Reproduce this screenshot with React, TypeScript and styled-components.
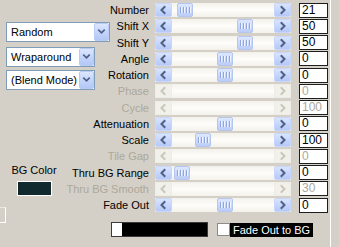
import styled, { createGlobalStyle } from "styled-components";

const GlobalStyle = createGlobalStyle`
  html, body {
    margin: 0;
    padding: 0;
    background: #d4d0c8;
  }
  body {
    font-family: "Liberation Sans", Arial, sans-serif;
    font-size: 11px;
    color: #000;
  }
`;

interface Param {
  label: string;
  value: string;
  thumb?: number;
  disabled?: boolean;
}

// thumb = left edge of the thumb, counted from the start of the slider
const params: Param[] = [
  { label: "Number", value: "21", thumb: 22 },
  { label: "Shift X", value: "50", thumb: 82 },
  { label: "Shift Y", value: "50", thumb: 82 },
  { label: "Angle", value: "0", thumb: 62 },
  { label: "Rotation", value: "0", thumb: 62 },
  { label: "Phase", value: "0", disabled: true },
  { label: "Cycle", value: "100", disabled: true },
  { label: "Attenuation", value: "0", thumb: 62 },
  { label: "Scale", value: "100", thumb: 40 },
  { label: "Tile Gap", value: "0", disabled: true },
  { label: "Thru BG Range", value: "0", thumb: 19 },
  { label: "Thru BG Smooth", value: "30", disabled: true },
  { label: "Fade Out", value: "0", thumb: 62 },
];

function Chevron({ dir, disabled }: { dir: "left" | "right" | "down"; disabled?: boolean }) {
  const pts =
    dir === "left"
      ? "9.5,4 6.5,7 9.5,10"
      : dir === "right"
      ? "7.5,4 10.5,7 7.5,10"
      : "4.5,7 7.5,10 10.5,7";
  const w = dir === "down" ? 15 : 17;
  const h = dir === "down" ? 18 : 14;
  return (
    <svg width={w} height={h} viewBox={`0 0 ${w} ${h}`}>
      <polyline
        points={pts}
        fill="none"
        stroke={disabled ? "#c9c7ba" : "#4d6185"}
        strokeWidth={2}
        strokeLinecap="square"
      />
    </svg>
  );
}

function Slider({ thumb, disabled }: { thumb?: number; disabled?: boolean }) {
  return (
    <SliderBox>
      <ArrowBtn $disabled={disabled}>
        <Chevron dir="left" disabled={disabled} />
      </ArrowBtn>
      <Track>
        {thumb !== undefined && !disabled && (
          <Thumb style={{ left: thumb - 17 }}>
            <Grip />
            <Grip />
            <Grip />
            <Grip />
          </Thumb>
        )}
      </Track>
      <ArrowBtn $disabled={disabled}>
        <Chevron dir="right" disabled={disabled} />
      </ArrowBtn>
    </SliderBox>
  );
}

export default function App() {
  return (
    <>
      <GlobalStyle />
      <Page>
        <LeftPane>
          <Combo $w={104} $top={22}>
            <ComboText>Random</ComboText>
            <ComboBtn>
              <Chevron dir="down" />
            </ComboBtn>
          </Combo>
          <Combo $w={89} $top={5}>
            <ComboText>Wraparound</ComboText>
            <ComboBtn>
              <Chevron dir="down" />
            </ComboBtn>
          </Combo>
          <Combo $w={89} $top={3}>
            <ComboText>(Blend Mode)</ComboText>
            <ComboBtn>
              <Chevron dir="down" />
            </ComboBtn>
          </Combo>
          <BgGroup>
            <BgLabel>BG Color</BgLabel>
            <Swatch />
          </BgGroup>
          <EdgeBox />
        </LeftPane>
        <Main>
          {params.map((p) => (
            <Row key={p.label}>
              <Label $disabled={p.disabled}>{p.label}</Label>
              <Slider thumb={p.thumb} disabled={p.disabled} />
              <ValueBox $disabled={p.disabled}>{p.value}</ValueBox>
            </Row>
          ))}
          <BottomBar>
            <ColorBar>
              <ColorStart />
            </ColorBar>
            <Check />
            <CheckLabel>Fade Out to BG</CheckLabel>
          </BottomBar>
        </Main>
        <RightEdge />
      </Page>
    </>
  );
}

const Page = styled.div`
  display: flex;
  width: 339px;
  height: 247px;
  overflow: hidden;
  background: #d4d0c8;
`;

const LeftPane = styled.div`
  width: 62px;
  flex-shrink: 0;
  display: flex;
  flex-direction: column;
`;

const Combo = styled.div<{ $w: number; $top: number }>`
  position: relative;
  z-index: 1;
  box-sizing: border-box;
  width: ${(p) => p.$w}px;
  height: 20px;
  margin: ${(p) => p.$top}px 0 0 6px;
  border: 1px solid #7f9db9;
  background: #fff;
  display: flex;
  align-items: center;
`;

const ComboText = styled.span`
  flex: 1;
  padding-left: 4px;
  white-space: nowrap;
`;

const ComboBtn = styled.div`
  width: 15px;
  height: 18px;
  margin-right: 0;
  box-sizing: border-box;
  border: 1px solid #b9cbf3;
  border-radius: 2px;
  background: linear-gradient(180deg, #dce6fd 0%, #c3d4fb 55%, #b3c7f6 100%);
  display: flex;
  align-items: center;
  justify-content: center;
`;

const BgGroup = styled.div`
  margin: 74px 0 0 12px;
  width: 44px;
  display: flex;
  flex-direction: column;
  align-items: center;
`;

const BgLabel = styled.span`
  line-height: 13px;
  white-space: nowrap;
`;

const Swatch = styled.div`
  margin-top: 4px;
  width: 35px;
  height: 15px;
  box-sizing: border-box;
  border: 1px solid #fff;
  background: #10292e;
`;

const EdgeBox = styled.div`
  margin-top: 11px;
  width: 6px;
  height: 16px;
  box-sizing: border-box;
  border-top: 1px solid #ece9e2;
  border-right: 1px solid #fff;
  border-bottom: 1px solid #fff;
`;

const Main = styled.div`
  flex: 1;
  padding-top: 2px;
  display: flex;
  flex-direction: column;
`;

const Row = styled.div`
  height: 16.25px;
  display: flex;
  align-items: center;
`;

const Label = styled.span<{ $disabled?: boolean }>`
  width: 87px;
  text-align: right;
  white-space: nowrap;
  color: ${(p) => (p.$disabled ? "#aca899" : "#000")};
`;

const SliderBox = styled.div`
  margin-left: 6px;
  width: 136px;
  height: 14px;
  display: flex;
  background: linear-gradient(180deg, #f3f1ea 0%, #fdfdfb 50%, #f3f1ea 100%);
`;

const ArrowBtn = styled.div<{ $disabled?: boolean }>`
  width: 17px;
  height: 14px;
  box-sizing: border-box;
  border-radius: 2px;
  border: 1px solid ${(p) => (p.$disabled ? "#eeede5" : "#c6d6fc")};
  background: ${(p) =>
    p.$disabled
      ? "#f1f0ea"
      : "linear-gradient(180deg, #d9e4fe 0%, #c3d3fb 60%, #b6c9f6 100%)"};
  display: flex;
  align-items: center;
  justify-content: center;
  & > svg {
    margin: -1px;
  }
`;

const Track = styled.div`
  flex: 1;
  position: relative;
`;

const Thumb = styled.div`
  position: absolute;
  top: 0;
  width: 16px;
  height: 14px;
  box-sizing: border-box;
  border: 1px solid #b5c6ee;
  border-radius: 2px;
  background: linear-gradient(180deg, #dde7fe 0%, #c7d6fc 60%, #bccdf8 100%);
  display: flex;
  align-items: center;
  justify-content: center;
  gap: 1px;
`;

const Grip = styled.span`
  width: 1px;
  height: 6px;
  background: #8fa7dc;
  border-right: 1px solid #eef3fe;
`;

const ValueBox = styled.div<{ $disabled?: boolean }>`
  margin-left: 8px;
  width: 29px;
  height: 15px;
  box-sizing: border-box;
  border: 1px solid #1e1e1e;
  background: #fff;
  padding-left: 2px;
  font-size: 12px;
  line-height: 13px;
  color: ${(p) => (p.$disabled ? "#aca899" : "#000")};
`;

const BottomBar = styled.div`
  margin-top: 9px;
  padding-left: 49px;
  display: flex;
  align-items: center;
`;

const ColorBar = styled.div`
  width: 97px;
  height: 15px;
  box-sizing: border-box;
  border: 1px solid #3a3a3a;
  background: #000;
  display: flex;
`;

const ColorStart = styled.div`
  width: 10px;
  background: #fff;
`;

const Check = styled.div`
  margin-left: 9px;
  width: 13px;
  height: 13px;
  box-sizing: border-box;
  border: 1px solid #8c8c8c;
  background: #fff;
`;

const CheckLabel = styled.span`
  background: #000;
  color: #fff;
  padding: 0 3px;
  line-height: 14px;
  white-space: nowrap;
`;

const RightEdge = styled.div`
  width: 1px;
  margin: 0 8px 0 0;
  background: #fff;
`;
